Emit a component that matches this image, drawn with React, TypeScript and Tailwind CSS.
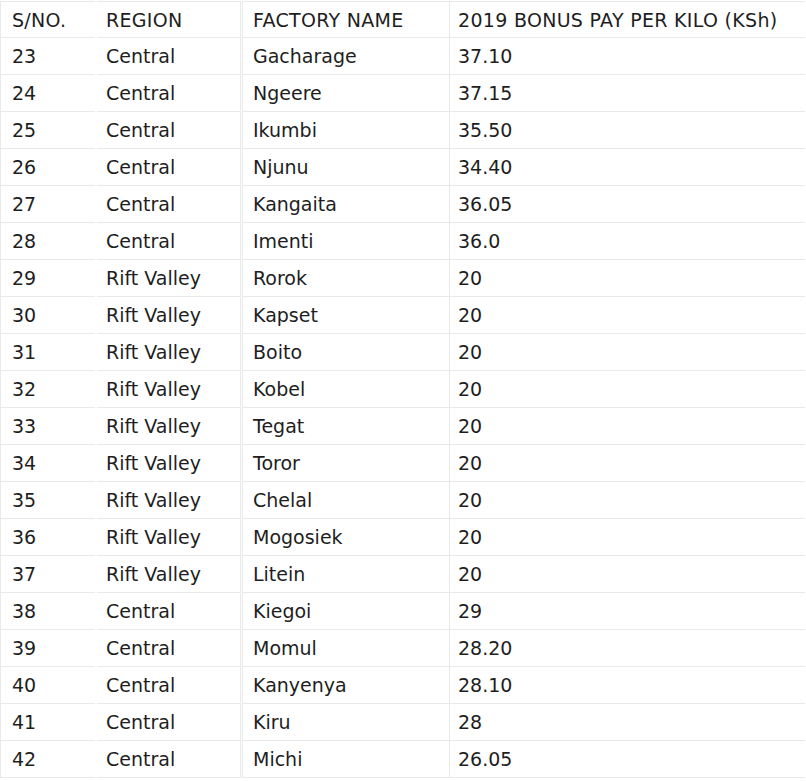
const rows: [number, string, string, string][] = [
  [23, "Central", "Gacharage", "37.10"],
  [24, "Central", "Ngeere", "37.15"],
  [25, "Central", "Ikumbi", "35.50"],
  [26, "Central", "Njunu", "34.40"],
  [27, "Central", "Kangaita", "36.05"],
  [28, "Central", "Imenti", "36.0"],
  [29, "Rift Valley", "Rorok", "20"],
  [30, "Rift Valley", "Kapset", "20"],
  [31, "Rift Valley", "Boito", "20"],
  [32, "Rift Valley", "Kobel", "20"],
  [33, "Rift Valley", "Tegat", "20"],
  [34, "Rift Valley", "Toror", "20"],
  [35, "Rift Valley", "Chelal", "20"],
  [36, "Rift Valley", "Mogosiek", "20"],
  [37, "Rift Valley", "Litein", "20"],
  [38, "Central", "Kiegoi", "29"],
  [39, "Central", "Momul", "28.20"],
  [40, "Central", "Kanyenya", "28.10"],
  [41, "Central", "Kiru", "28"],
  [42, "Central", "Michi", "26.05"],
];

function Row({ cells, header }: { cells: string[]; header?: boolean }) {
  const h = header ? "h-[37px] border-t pt-[2px] tracking-[0.3px]" : "h-[37px]";
  return (
    <div className="flex">
      <div className={`${h} w-[95px] shrink-0 border-b border-l border-[#e9e9e9] pl-[11px] flex items-center`}>
        {cells[0]}
      </div>
      <div className={`${h} ml-[2px] w-[144px] shrink-0 border-b border-r border-[#e9e9e9] pl-[9px] flex items-center`}>
        {cells[1]}
      </div>
      <div className={`${h} ml-[1px] w-[208px] shrink-0 border-b border-l border-r border-[#e9e9e9] pl-[10px] flex items-center`}>
        {cells[2]}
      </div>
      <div className={`${h} flex-1 border-b border-[#e9e9e9] pl-[8px] flex items-center`}>
        {cells[3]}
      </div>
    </div>
  );
}

export default function App() {
  return (
    <div
      className="w-[806px] h-[781px] bg-white pt-[1px] pr-[1px] text-[19px] text-[#1e1e1e] overflow-hidden whitespace-nowrap"
      style={{ fontFamily: '"DejaVu Sans", Verdana, sans-serif' }}
    >
      <Row header cells={["S/NO.", "REGION", "FACTORY NAME", "2019 BONUS PAY PER KILO (KSh)"]} />
      {rows.map((r) => (
        <Row key={r[0]} cells={[String(r[0]), r[1], r[2], r[3]]} />
      ))}
    </div>
  );
}
